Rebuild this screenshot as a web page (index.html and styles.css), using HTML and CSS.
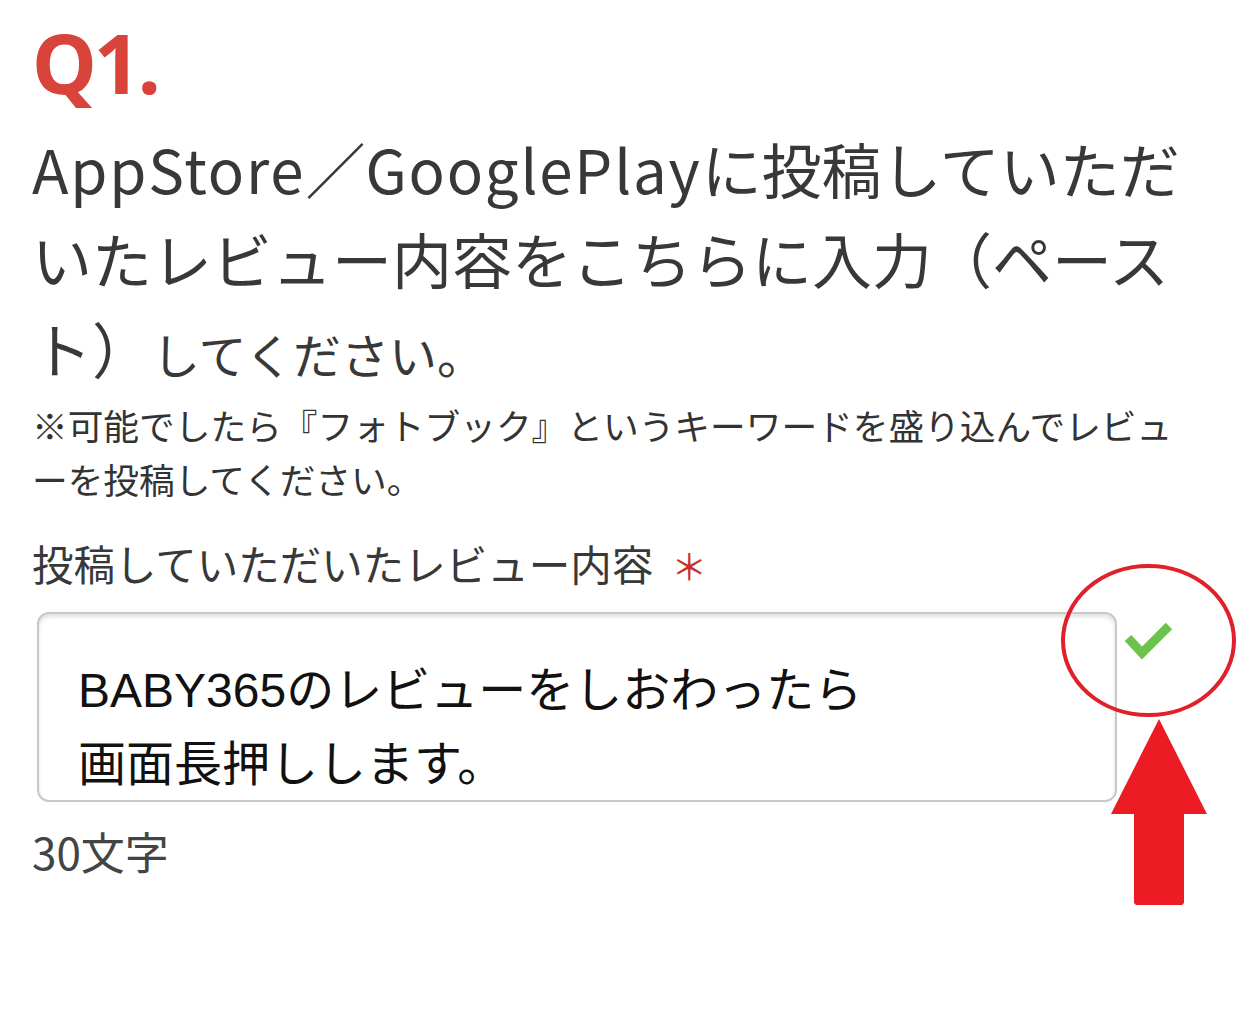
FILE: index.html
```html
<!DOCTYPE html>
<html lang="ja">
<head>
<meta charset="utf-8">
<link rel="stylesheet" href="styles.css">
</head>
<body>
<main class="page">
  <div class="qnum">Q1.</div>
  <h1 class="question"><span class="latin">AppStore</span>／<span class="latin">GooglePlay</span>に投稿していただいたレビュー内容をこちらに入力（ペースト）<span class="small">してください。</span></h1>
  <p class="note">※可能でしたら『フォトブック』というキーワードを盛り込んでレビューを投稿してください。</p>
  <div class="label">投稿していただいたレビュー内容<span class="req">＊</span></div>
  <div class="field">
    <div class="box">BABY365のレビューをしおわったら<br>画面長押しします。</div>
    <svg class="overlay" width="187" height="350" viewBox="0 0 187 350">
      <ellipse cx="93.5" cy="80.5" rx="85.5" ry="74.5" fill="none" stroke="#e0202a" stroke-width="4"/>
      <polyline points="73,78 87,93 114,66" fill="none" stroke="#6cc24a" stroke-width="9" stroke-linejoin="miter" stroke-linecap="butt"/>
      <polygon points="104,159 152,254 129,254 129,343 127,345 81,345 79,343 79,254 56,254" fill="#ed1c24"/>
    </svg>
  </div>
  <div class="count">30文字</div>
</main>
</body>
</html>
```
FILE: styles.css
```css
html, body {
  margin: 0;
  padding: 0;
  background: #ffffff;
}
.page {
  box-sizing: border-box;
  min-height: 1009px;
  padding: 12px 0 0 32px;
  width: 1192px;
  font-family: "Noto Sans CJK JP", "Noto Sans", sans-serif;
  color: #333333;
}
.qnum {
  font-family: "Noto Sans", "Open Sans", sans-serif;
  font-size: 82px;
  line-height: 100px;
  font-weight: 700;
  color: #d9443a;
  letter-spacing: -3px;
}
.question {
  margin: 11px 0 0 0;
  font-size: 60px;
  line-height: 90px;
  font-weight: 400;
  color: #383838;
}
.question .latin {
  letter-spacing: 1.8px;
}
.question .small {
  font-size: 48px;
}
.note {
  margin: 0;
  font-size: 35.7px;
  line-height: 54px;
  color: #333333;
}
.label {
  margin-top: 27px;
  font-size: 41.5px;
  line-height: 60px;
  color: #383838;
}
.req {
  color: #c7322b;
  font-size: 36px;
  margin-left: 18px;
}
.field {
  position: relative;
  margin-top: 17px;
}
.box {
  margin-left: 5px;
  box-sizing: border-box;
  width: 1080px;
  height: 190px;
  border: 2px solid #c8c8c8;
  border-radius: 12px;
  box-shadow: inset 0 3px 4px rgba(0, 0, 0, 0.12);
  padding: 40px 0 0 39px;
  overflow: hidden;
  font-family: "Liberation Sans", "Noto Sans CJK JP", sans-serif;
  font-size: 48px;
  line-height: 74px;
  color: #111111;
}
.overlay {
  position: absolute;
  left: 1023px;
  top: -52px;
}
.count {
  margin-top: 19px;
  font-size: 44px;
  line-height: 60px;
  color: #444444;
}
```
